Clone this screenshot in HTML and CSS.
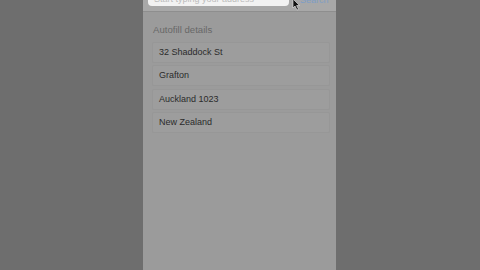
FILE: index.html
```html
<!DOCTYPE html>
<html>
<head>
<meta charset="utf-8">
<link rel="stylesheet" href="styles.css">
</head>
<body>
<div class="stage">
  <div class="side"></div>
  <div class="phone">
    <div class="header">
      <div class="search">
        <span class="placeholder">Start typing your address</span>
      </div>
      <span class="action">Search</span>
      <svg class="cursor" width="9" height="12" viewBox="0 0 9 12"><path d="M1 0 L1 9 L3 7 L5 11 L6.5 10.3 L4.6 6.5 L7.5 6.5 Z" fill="#111" stroke="#eee" stroke-width="0.6"/></svg>
    </div>
    <div class="content">
      <div class="label">Autofill details</div>
      <div class="rows">
        <div class="row">32 Shaddock St</div>
        <div class="row">Grafton</div>
        <div class="row">Auckland 1023</div>
        <div class="row">New Zealand</div>
      </div>
    </div>
  </div>
  <div class="side"></div>
</div>
</body>
</html>
```
FILE: styles.css
```css
html, body {
  margin: 0;
  padding: 0;
  width: 480px;
  height: 270px;
  overflow: hidden;
  background: #6e6e6e;
  font-family: "Liberation Sans", Arial, sans-serif;
}
.stage {
  display: flex;
  width: 480px;
  height: 270px;
}
.side {
  flex: 1;
  background: #6e6e6e;
}
.phone {
  width: 193px;
  margin-left: -1px;
  background: #9b9b9b;
  display: flex;
  flex-direction: column;
  height: 270px;
}
.header {
  position: relative;
  height: 11px;
  background: #a8a8a8;
  border-bottom: 1px solid #8e8e8e;
  display: flex;
  align-items: flex-start;
  overflow: hidden;
}
.search {
  margin-left: 5px;
  width: 141px;
  height: 6px;
  background: #f2f2f2;
  border-radius: 0 0 4px 4px;
  overflow: hidden;
  display: flex;
  align-items: flex-end;
}
.placeholder {
  font-size: 9px;
  color: #bdbdbd;
  margin-left: 6px;
  line-height: 9px;
  margin-bottom: 2px;
  white-space: nowrap;
}
.action {
  margin-left: 11px;
  font-size: 9px;
  line-height: 9px;
  margin-top: -4.5px;
  color: #7d9dc6;
}
.cursor {
  position: absolute;
  left: 149px;
  top: -1px;
}
.content {
  padding: 0 6px 0 9px;
}
.label {
  margin-top: 12px;
  font-size: 9.6px;
  line-height: 12px;
  color: #686868;
  padding-left: 1px;
}
.rows {
  margin-top: 6px;
  display: flex;
  flex-direction: column;
  gap: 2.3px;
}
.row {
  height: 19px;
  border: 1px solid #979797;
  background: #9d9d9d;
  border-radius: 2px;
  font-size: 9px;
  line-height: 19px;
  color: #2b2b2b;
  padding-left: 6px;
}
```
